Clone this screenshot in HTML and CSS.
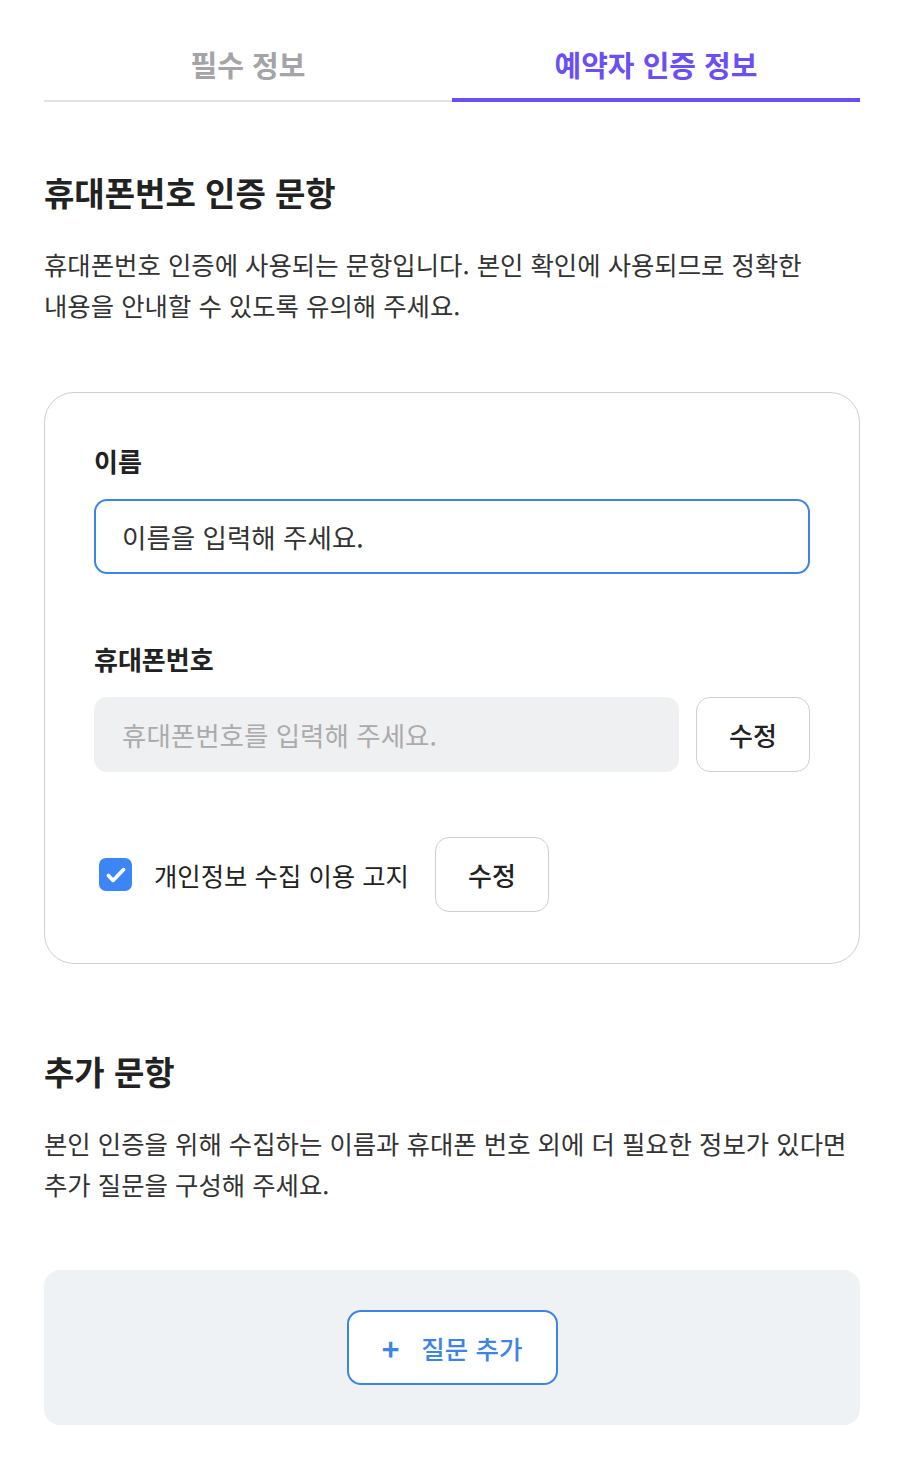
FILE: index.html
```html
<html lang="ko">
<head>
  <meta charset="UTF-8" />
  <meta name="viewport" content="width=device-width, initial-scale=1.0" />
  <title>예약자 인증 정보</title>
  <link rel="stylesheet" href="styles.css">
</head>
<body>
  <div class="page">
    <div class="tabs">
      <div class="tab">필수 정보</div>
      <div class="tab active">예약자 인증 정보</div>
    </div>

    <div class="section">
      <h2 class="section-title">휴대폰번호 인증 문항</h2>
      <p class="section-desc">휴대폰번호 인증에 사용되는 문항입니다. 본인 확인에 사용되므로 정확한 내용을 안내할 수 있도록 유의해 주세요.</p>
    </div>

    <div class="card">
      <div class="field">
        <div class="field-label">이름</div>
        <div class="input focused">이름을 입력해 주세요.</div>
      </div>

      <div class="field">
        <div class="field-label">휴대폰번호</div>
        <div class="input-row">
          <div class="input disabled">휴대폰번호를 입력해 주세요.</div>
          <button class="btn-outline">수정</button>
        </div>
      </div>

      <div class="consent-row">
        <span class="checkbox">
          <svg width="26" height="26" viewBox="0 0 24 24"><path d="M5 12.5l4.3 4.5L19 7" fill="none" stroke="#fff" stroke-width="3.4" stroke-linecap="round" stroke-linejoin="round"/></svg>
        </span>
        <span class="consent-text">개인정보 수집 이용 고지</span>
        <button class="btn-outline">수정</button>
      </div>
    </div>

    <div class="section extra">
      <h2 class="section-title">추가 문항</h2>
      <p class="section-desc">본인 인증을 위해 수집하는 이름과 휴대폰 번호 외에 더 필요한 정보가 있다면 추가 질문을 구성해 주세요.</p>
    </div>

    <div class="add-box">
      <button class="btn-add"><span class="plus">+</span>질문 추가</button>
    </div>
  </div>
</body>
</html>
```

FILE: styles.css
```css
:root {
  --text: #222;
  --body: #333;
  --muted: #a3a3a8;
  --line: #e2e2e2;
  --purple: #6a4ff5;
  --blue: #3d84e6;
  --check: #3b86f4;
}

body {
  margin: 0;
  font-family: "Noto Sans CJK KR", "Noto Sans", sans-serif;
  color: var(--text);
  background: #fff;
  word-break: keep-all;
}

.page {
  width: 816px;
  padding: 0 44px;
}

.tabs {
  display: flex;
}

.tab {
  flex: 1;
  text-align: center;
  font-size: 29px;
  font-weight: 700;
  line-height: 40px;
  padding: 44px 0 16px;
  color: var(--muted);
  border-bottom: 2px solid var(--line);
}

.tab.active {
  color: var(--purple);
  padding-bottom: 14px;
  border-bottom: 4px solid var(--purple);
}

.section {
  margin-top: 68px;
}

.section.extra {
  margin-top: 85px;
}

.section-title {
  margin: 0;
  font-size: 33px;
  font-weight: 700;
  line-height: 44px;
}

.section-desc {
  margin: 30px 0 0;
  font-size: 25.4px;
  line-height: 41px;
  color: var(--body);
}

.card {
  margin-top: 66px;
  border: 1.5px solid #cfcfcf;
  border-radius: 30px;
  padding: 52px 49px 51px;
}

.field + .field {
  margin-top: 69px;
}

.field-label {
  font-size: 26px;
  font-weight: 700;
  line-height: 32px;
  margin-bottom: 22px;
}

.input {
  box-sizing: border-box;
  height: 75px;
  border-radius: 13px;
  padding: 0 26px;
  display: flex;
  align-items: center;
  font-size: 26.5px;
  color: var(--body);
}

.input.focused {
  border: 2px solid var(--blue);
}

.input.disabled {
  flex: 1;
  background: #eff0f1;
  color: #ababab;
  padding-left: 28px;
}

.input-row {
  display: flex;
  gap: 17px;
}

.btn-outline {
  box-sizing: border-box;
  width: 114px;
  height: 75px;
  background: #fff;
  border: 1.5px solid #cfcfcf;
  border-radius: 14px;
  font-family: inherit;
  font-size: 26px;
  font-weight: 500;
  color: var(--text);
}

.consent-row {
  display: flex;
  align-items: center;
  margin-top: 65px;
}

.checkbox {
  width: 33px;
  height: 33px;
  border-radius: 7px;
  background: var(--check);
  margin-left: 5px;
  display: flex;
  align-items: center;
  justify-content: center;
}

.consent-text {
  margin-left: 22px;
  margin-right: 26px;
  font-size: 25.4px;
  color: var(--text);
}

.add-box {
  margin-top: 65px;
  background: #eff2f5;
  border-radius: 16px;
  padding: 40px 0;
  display: flex;
  justify-content: center;
}

.btn-add {
  box-sizing: border-box;
  height: 75px;
  width: 211px;
  background: #fff;
  border: 2px solid var(--blue);
  border-radius: 14px;
  font-family: inherit;
  font-size: 25.5px;
  font-weight: 500;
  color: var(--blue);
  display: flex;
  align-items: center;
  justify-content: center;
  padding-left: 6px;
}

.plus {
  font-size: 30px;
  font-weight: 700;
  margin-right: 22px;
  line-height: 1;
}
```
